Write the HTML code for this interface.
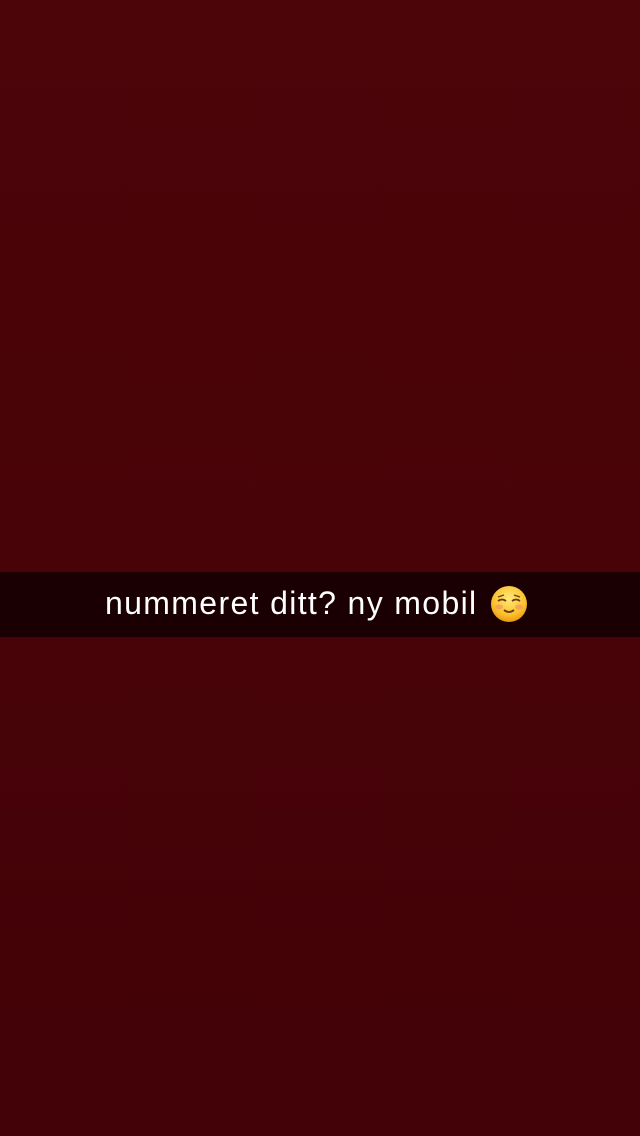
<!DOCTYPE html>
<html><head><meta charset="utf-8"><style>
html,body{margin:0;padding:0;width:640px;height:1136px;overflow:hidden}
body{background:linear-gradient(180deg,#4c0509 0%,#480308 50%,#420207 100%);position:relative;font-family:"Liberation Sans",sans-serif}
.bar{position:absolute;left:0;top:572px;width:640px;height:65px;background:rgba(20,0,2,0.85)}
.t{position:absolute;left:105px;top:584px;color:#fff;font-size:32px;letter-spacing:1.35px;line-height:38px;white-space:nowrap}
svg{position:absolute;left:490px;top:585px}
</style></head><body>
<div class="bar"></div>
<div class="t">nummeret ditt? ny mobil</div>
<svg width="38" height="38" viewBox="0 0 38 38">
<defs><radialGradient id="g" cx="0.5" cy="0.35" r="0.65"><stop offset="0" stop-color="#ffe97a"/><stop offset="0.7" stop-color="#fbc02d"/><stop offset="1" stop-color="#e89a10"/></radialGradient></defs>
<circle cx="19" cy="19" r="18" fill="url(#g)"/>
<ellipse cx="9" cy="22" rx="4" ry="2.5" fill="#f48a6a" opacity="0.6"/>
<ellipse cx="29" cy="22" rx="4" ry="2.5" fill="#f48a6a" opacity="0.6"/>
<path d="M8 16 Q12 13 16 16" stroke="#6b3a0a" stroke-width="1.8" fill="none"/>
<path d="M22 16 Q26 13 30 16" stroke="#6b3a0a" stroke-width="1.8" fill="none"/>
<path d="M8 12 L14 10" stroke="#6b3a0a" stroke-width="1.2" fill="none"/>
<path d="M30 12 L24 10" stroke="#6b3a0a" stroke-width="1.2" fill="none"/>
<path d="M14 25 Q19 29 24 25" stroke="#6b3a0a" stroke-width="1.8" fill="none"/>
</svg>
</body></html>
